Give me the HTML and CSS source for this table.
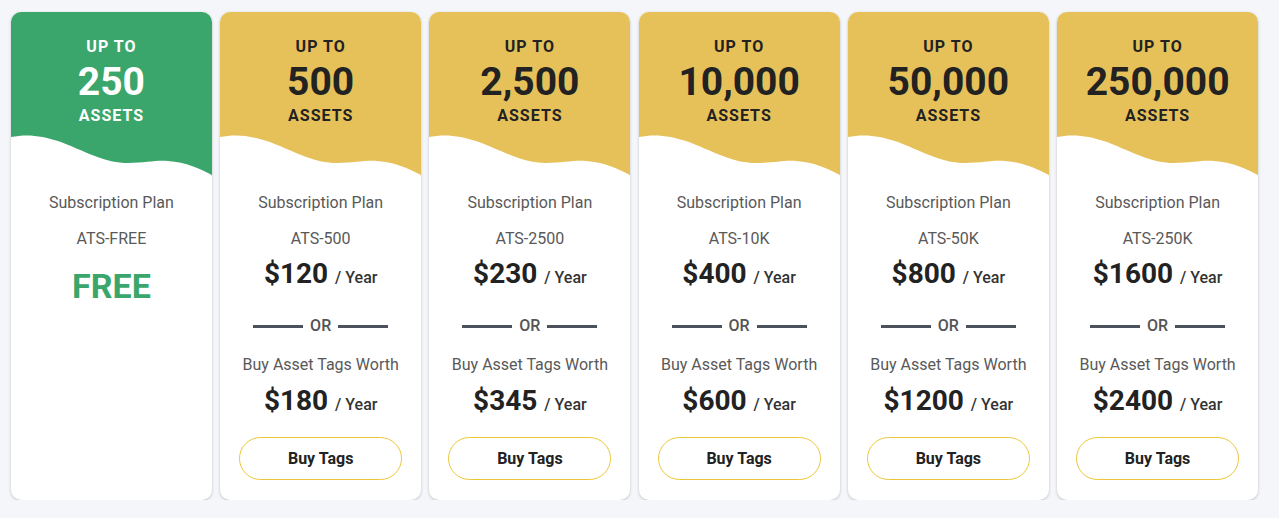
FILE: index.html
```html
<!DOCTYPE html>
<html>
<head>
<meta charset="utf-8">
<link rel="stylesheet" href="styles.css">
</head>
<body>
<div class="plans">
  <div class="card free">
    <div class="head">
      <div class="upto">UP TO</div>
      <div class="count">250</div>
      <div class="assets">ASSETS</div>
      <svg class="wave" viewBox="0 0 201 44" preserveAspectRatio="none"><path d="M0 5 C15 2 30 3 50 10 C80 22 95 31 117 31 C135 31 145 28 157 29 C175 30 190 37 201 43 L201 44 L0 44 Z" fill="#fff"/></svg>
    </div>
    <div class="body">
      <div class="label">Subscription Plan</div>
      <div class="code">ATS-FREE</div>
      <div class="freetext">FREE</div>
    </div>
  </div>

  <div class="card">
    <div class="head">
      <div class="upto">UP TO</div>
      <div class="count">500</div>
      <div class="assets">ASSETS</div>
      <svg class="wave" viewBox="0 0 201 44" preserveAspectRatio="none"><path d="M0 5 C15 2 30 3 50 10 C80 22 95 31 117 31 C135 31 145 28 157 29 C175 30 190 37 201 43 L201 44 L0 44 Z" fill="#fff"/></svg>
    </div>
    <div class="body">
      <div class="label">Subscription Plan</div>
      <div class="code">ATS-500</div>
      <div class="price">$120 <span>/ Year</span></div>
      <div class="or"><i></i>OR<i></i></div>
      <div class="label2">Buy Asset Tags Worth</div>
      <div class="price p2">$180 <span>/ Year</span></div>
      <button class="btn">Buy Tags</button>
    </div>
  </div>

  <div class="card">
    <div class="head">
      <div class="upto">UP TO</div>
      <div class="count">2,500</div>
      <div class="assets">ASSETS</div>
      <svg class="wave" viewBox="0 0 201 44" preserveAspectRatio="none"><path d="M0 5 C15 2 30 3 50 10 C80 22 95 31 117 31 C135 31 145 28 157 29 C175 30 190 37 201 43 L201 44 L0 44 Z" fill="#fff"/></svg>
    </div>
    <div class="body">
      <div class="label">Subscription Plan</div>
      <div class="code">ATS-2500</div>
      <div class="price">$230 <span>/ Year</span></div>
      <div class="or"><i></i>OR<i></i></div>
      <div class="label2">Buy Asset Tags Worth</div>
      <div class="price p2">$345 <span>/ Year</span></div>
      <button class="btn">Buy Tags</button>
    </div>
  </div>

  <div class="card">
    <div class="head">
      <div class="upto">UP TO</div>
      <div class="count">10,000</div>
      <div class="assets">ASSETS</div>
      <svg class="wave" viewBox="0 0 201 44" preserveAspectRatio="none"><path d="M0 5 C15 2 30 3 50 10 C80 22 95 31 117 31 C135 31 145 28 157 29 C175 30 190 37 201 43 L201 44 L0 44 Z" fill="#fff"/></svg>
    </div>
    <div class="body">
      <div class="label">Subscription Plan</div>
      <div class="code">ATS-10K</div>
      <div class="price">$400 <span>/ Year</span></div>
      <div class="or"><i></i>OR<i></i></div>
      <div class="label2">Buy Asset Tags Worth</div>
      <div class="price p2">$600 <span>/ Year</span></div>
      <button class="btn">Buy Tags</button>
    </div>
  </div>

  <div class="card">
    <div class="head">
      <div class="upto">UP TO</div>
      <div class="count">50,000</div>
      <div class="assets">ASSETS</div>
      <svg class="wave" viewBox="0 0 201 44" preserveAspectRatio="none"><path d="M0 5 C15 2 30 3 50 10 C80 22 95 31 117 31 C135 31 145 28 157 29 C175 30 190 37 201 43 L201 44 L0 44 Z" fill="#fff"/></svg>
    </div>
    <div class="body">
      <div class="label">Subscription Plan</div>
      <div class="code">ATS-50K</div>
      <div class="price">$800 <span>/ Year</span></div>
      <div class="or"><i></i>OR<i></i></div>
      <div class="label2">Buy Asset Tags Worth</div>
      <div class="price p2">$1200 <span>/ Year</span></div>
      <button class="btn">Buy Tags</button>
    </div>
  </div>

  <div class="card">
    <div class="head">
      <div class="upto">UP TO</div>
      <div class="count">250,000</div>
      <div class="assets">ASSETS</div>
      <svg class="wave" viewBox="0 0 201 44" preserveAspectRatio="none"><path d="M0 5 C15 2 30 3 50 10 C80 22 95 31 117 31 C135 31 145 28 157 29 C175 30 190 37 201 43 L201 44 L0 44 Z" fill="#fff"/></svg>
    </div>
    <div class="body">
      <div class="label">Subscription Plan</div>
      <div class="code">ATS-250K</div>
      <div class="price">$1600 <span>/ Year</span></div>
      <div class="or"><i></i>OR<i></i></div>
      <div class="label2">Buy Asset Tags Worth</div>
      <div class="price p2">$2400 <span>/ Year</span></div>
      <button class="btn">Buy Tags</button>
    </div>
  </div>
</div>
</body>
</html>
```

FILE: styles.css
```css
html, body {
  margin: 0;
  padding: 0;
  background: #f4f6fa;
  font-family: Roboto, "Liberation Sans", sans-serif;
}
.plans {
  display: flex;
  gap: 8.4px;
  width: 1247px;
  margin: 12px 0 0 11px;
}
.card {
  flex: 1;
  min-width: 0;
  height: 488px;
  background: #fff;
  border-radius: 10px;
  overflow: hidden;
  box-shadow: 0 1px 3px rgba(0, 0, 0, 0.22);
  display: flex;
  flex-direction: column;
}
.head {
  background: #e6c15a;
  color: #222;
  text-align: center;
  padding-top: 25px;
  font-weight: 700;
}
.free .head {
  background: #3aa66b;
  color: #fff;
}
.upto, .assets {
  font-size: 16px;
  line-height: 20px;
  letter-spacing: 1px;
}
.count {
  font-size: 39px;
  line-height: 44px;
  margin-top: 3px;
}
.assets {
  margin-top: 2px;
}
.wave {
  display: block;
  width: 100%;
  height: 44px;
  margin-top: 6px;
}
.body {
  display: flex;
  flex-direction: column;
  align-items: center;
  text-align: center;
  padding-top: 17px;
}
.label, .code, .label2 {
  font-size: 16px;
  line-height: 20px;
  color: #595959;
}
.code {
  margin-top: 16px;
}
.freetext {
  margin-top: 17px;
  font-size: 34px;
  line-height: 40px;
  font-weight: 700;
  color: #3aa66b;
}
.price {
  margin-top: 8px;
  font-size: 28px;
  line-height: 34px;
  font-weight: 700;
  color: #222;
}
.price span {
  font-size: 16px;
  font-weight: 500;
  color: #333;
}
.or {
  margin-top: 21px;
  display: flex;
  align-items: center;
  gap: 7px;
  font-size: 16px;
  line-height: 20px;
  font-weight: 500;
  color: #555;
}
.or i {
  display: block;
  width: 50px;
  height: 3px;
  background: #4b525c;
}
.label2 {
  margin-top: 19px;
}
.p2 {
  margin-top: 9px;
}
.btn {
  margin-top: 15px;
  width: 163px;
  height: 43px;
  border: 1px solid #ecc638;
  border-radius: 22px;
  background: #fff;
  font-family: Roboto, "Liberation Sans", sans-serif;
  font-size: 16px;
  font-weight: 700;
  color: #222;
  padding: 0;
}
```
